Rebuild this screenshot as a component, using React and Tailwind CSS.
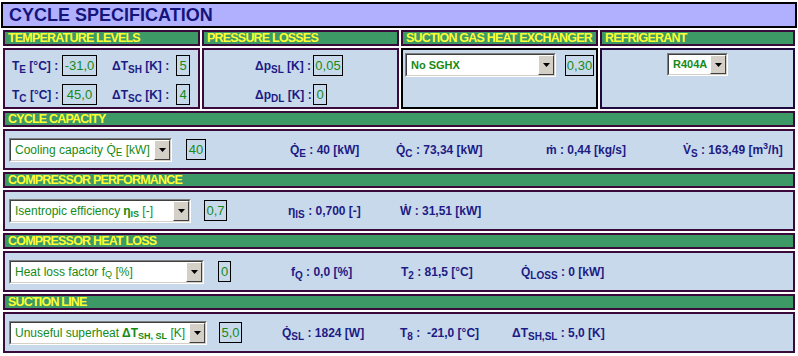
import React from "react";

// shared class strings
const navyLabel = "text-[12px] font-bold text-[#1c1c84] whitespace-nowrap leading-none";
const greenText = "text-[#168a16]";

function Sub({ children }) {
  return <sub className="text-[10px] bottom-[-3px]">{children}</sub>;
}

function Header({ children }) {
  return (
    <div className="h-[16px] border-2 border-[#3a0a3a] bg-[#3d9966] flex items-center pl-[3px] text-[12.5px] font-bold text-[#ffff33] tracking-[-0.8px] leading-none whitespace-nowrap overflow-hidden">
      {children}
    </div>
  );
}

function ValBox({ className, children }) {
  return (
    <div
      className={`h-[21px] border border-black flex items-center justify-center text-[13px] leading-none ${greenText} ${className}`}
    >
      {children}
    </div>
  );
}

function Arrow() {
  return (
    <svg width="7" height="4" viewBox="0 0 7 4">
      <path d="M0 0h7L3.5 4z" fill="#000" />
    </svg>
  );
}

function Combo({ className, textClass, children }) {
  return (
    <div
      className={`flex border border-[#808080] border-r-white border-b-white ${className}`}
    >
      <div className="flex flex-1 border border-[#404040] border-r-[#d4d0c8] border-b-[#d4d0c8] bg-white">
        <div
          className={`flex-1 flex items-center pl-[4px] whitespace-nowrap leading-none ${greenText} ${textClass}`}
        >
          {children}
        </div>
        <div className="w-[16px] bg-[#d4d0c8] border border-white border-r-[#404040] border-b-[#404040] flex items-center justify-center">
          <Arrow />
        </div>
      </div>
    </div>
  );
}

function Section({ title, children }) {
  return (
    <div className="mt-[2px]">
      <Header>{title}</Header>
      <div className="mt-[2px] h-[41px] border-2 border-[#3a0a3a] bg-[#c9d9ec] flex items-center pl-[4px]">
        {children}
      </div>
    </div>
  );
}

export default function App() {
  return (
    <div className="w-[798px] h-[356px] bg-white overflow-hidden pt-[2px] px-[1px] font-['Liberation_Sans',Arial,sans-serif]">
      {/* title */}
      <div className="h-[26px] border-2 border-black bg-[#b0b0ff] flex items-center pl-[6px]">
        <span className="text-[18px] font-bold text-[#14147a] leading-none">
          CYCLE SPECIFICATION
        </span>
      </div>

      <div className="mx-[2px]">
        {/* top row with four panels */}
        <div className="mt-[2px] grid grid-cols-[197px_197px_197px_1fr] gap-x-[2px]">
          <div className="flex flex-col">
            <Header>TEMPERATURE LEVELS</Header>
            <div className="mt-[2px] h-[61px] border-2 border-[#3a0a3a] bg-[#c9d9ec] flex flex-col pl-[7px] pt-[5px] gap-[8px]">
              <div className="flex items-center h-[21px]">
                <span className={`w-[50px] ${navyLabel}`}>
                  T<Sub>E</Sub> [°C] :
                </span>
                <ValBox className="w-[35px]">-31,0</ValBox>
                <span className={`ml-[15px] w-[64px] ${navyLabel}`}>
                  ΔT<Sub>SH</Sub> [K] :
                </span>
                <ValBox className="w-[14px]">5</ValBox>
              </div>
              <div className="flex items-center h-[21px]">
                <span className={`w-[50px] ${navyLabel}`}>
                  T<Sub>C</Sub> [°C] :
                </span>
                <ValBox className="w-[35px]">45,0</ValBox>
                <span className={`ml-[15px] w-[64px] ${navyLabel}`}>
                  ΔT<Sub>SC</Sub> [K] :
                </span>
                <ValBox className="w-[14px]">4</ValBox>
              </div>
            </div>
          </div>

          <div className="flex flex-col">
            <Header>PRESSURE LOSSES</Header>
            <div className="mt-[2px] h-[61px] border-2 border-[#3a0a3a] bg-[#c9d9ec] flex flex-col pl-[51px] pt-[5px] gap-[8px]">
              <div className="flex items-center h-[21px]">
                <span className={`w-[58px] ${navyLabel}`}>
                  Δp<Sub>SL</Sub> [K] :
                </span>
                <ValBox className="w-[30px]">0,05</ValBox>
              </div>
              <div className="flex items-center h-[21px]">
                <span className={`w-[58px] ${navyLabel}`}>
                  Δp<Sub>DL</Sub> [K] :
                </span>
                <ValBox className="w-[14px]">0</ValBox>
              </div>
            </div>
          </div>

          <div className="flex flex-col">
            <Header>SUCTION GAS HEAT EXCHANGER</Header>
            <div className="mt-[2px] h-[61px] border-2 border-black bg-[#c9d9ec] flex items-start pl-[2px] pt-[3px]">
              <div className="flex items-center">
                <Combo className="w-[151px] h-[24px]" textClass="text-[11px] font-bold">
                  No SGHX
                </Combo>
                <ValBox className="ml-[9px] w-[29px]">0,30</ValBox>
              </div>
            </div>
          </div>

          <div className="flex flex-col">
            <Header>REFRIGERANT</Header>
            <div className="mt-[2px] h-[61px] border-2 border-[#1e0a3c] bg-[#c9d9ec] flex justify-center items-start pt-[3px]">
              <Combo className="w-[61px] h-[23px]" textClass="text-[11px] font-bold">
                R404A
              </Combo>
            </div>
          </div>
        </div>

        <Section title="CYCLE CAPACITY">
          <Combo className="w-[163px] h-[24px]" textClass="text-[12px]">
            Cooling capacity Q̇<Sub>E</Sub>&nbsp;[kW]
          </Combo>
          <ValBox className="ml-[14px] w-[20px]">40</ValBox>
          <span className={`ml-[84px] w-[106px] ${navyLabel}`}>
            Q̇<Sub>E</Sub> : 40 [kW]
          </span>
          <span className={`w-[150px] ${navyLabel}`}>
            Q̇<Sub>C</Sub> : 73,34 [kW]
          </span>
          <span className={`w-[137px] ${navyLabel}`}>ṁ : 0,44 [kg/s]</span>
          <span className={navyLabel}>
            V̇<Sub>S</Sub> : 163,49 [m<sup>3</sup>/h]
          </span>
        </Section>

        <Section title="COMPRESSOR PERFORMANCE">
          <Combo className="w-[182px] h-[24px]" textClass="text-[12px]">
            Isentropic efficiency <b className="ml-[3px]">η<sub>IS</sub></b>&nbsp;[-]
          </Combo>
          <ValBox className="ml-[13px] w-[23px]">0,7</ValBox>
          <span className={`ml-[61px] w-[112px] ${navyLabel}`}>
            η<Sub>IS</Sub> : 0,700 [-]
          </span>
          <span className={navyLabel}>Ẇ : 31,51 [kW]</span>
        </Section>

        <Section title="COMPRESSOR HEAT LOSS">
          <Combo className="w-[195px] h-[24px]" textClass="text-[12px]">
            Heat loss factor f<sub>Q</sub>&nbsp;[%]
          </Combo>
          <ValBox className="ml-[14px] w-[13px]">0</ValBox>
          <span className={`ml-[60px] w-[110px] ${navyLabel}`}>
            f<Sub>Q</Sub> : 0,0 [%]
          </span>
          <span className={`w-[120px] ${navyLabel}`}>
            T<Sub>2</Sub> : 81,5 [°C]
          </span>
          <span className={navyLabel}>
            Q̇<Sub>LOSS</Sub> : 0 [kW]
          </span>
        </Section>

        <Section title="SUCTION LINE">
          <Combo className="w-[198px] h-[24px]" textClass="text-[12px]">
            Unuseful superheat <b className="ml-[3px]">ΔT<sub>SH, SL</sub></b>&nbsp;[K]
          </Combo>
          <ValBox className="ml-[12px] w-[23px]">5,0</ValBox>
          <span className={`ml-[40px] w-[118px] ${navyLabel}`}>
            Q̇<Sub>SL</Sub> : 1824 [W]
          </span>
          <span className={`w-[112px] ${navyLabel}`}>
            T<Sub>8</Sub> :&nbsp; -21,0 [°C]
          </span>
          <span className={navyLabel}>
            ΔT<Sub>SH,SL</Sub> : 5,0 [K]
          </span>
        </Section>
      </div>
    </div>
  );
}
